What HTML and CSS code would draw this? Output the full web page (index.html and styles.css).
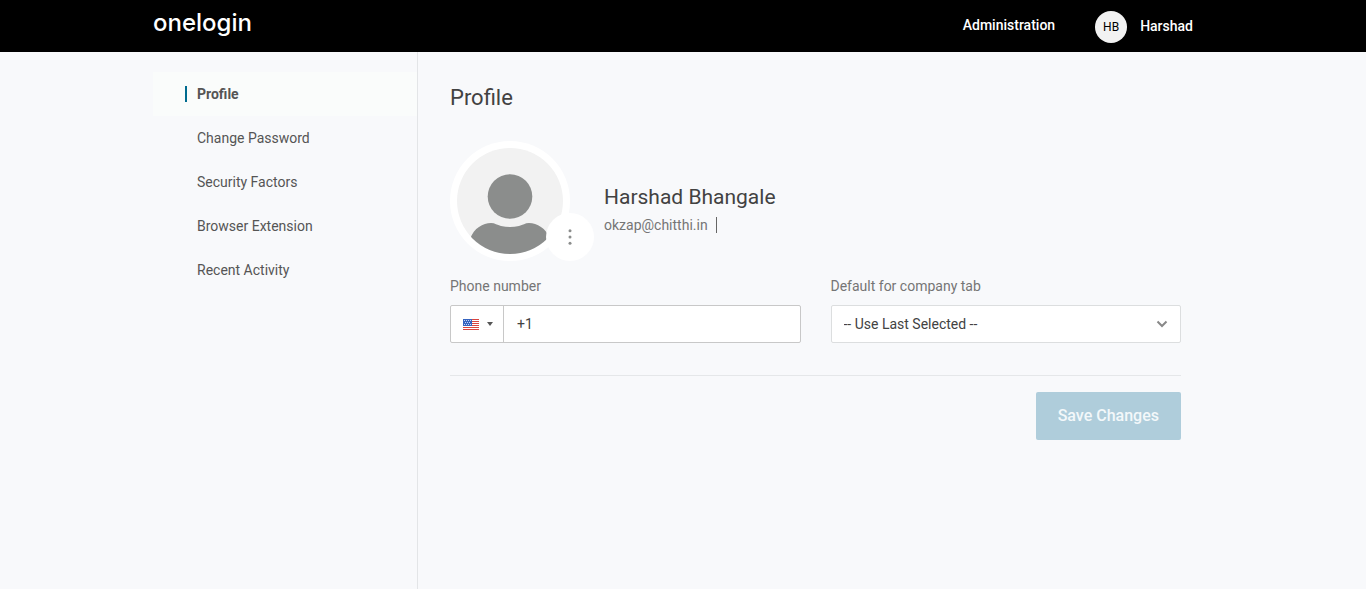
FILE: index.html
```html
<!DOCTYPE html>
<html lang="en">
<head>
<meta charset="utf-8">
<meta name="viewport" content="width=device-width, initial-scale=1">
<title>Profile</title>
<link rel="stylesheet" href="styles.css">
</head>
<body>
<header class="topbar">
  <div class="topbar-inner">
    <a class="logo" href="#">onelogin</a>
    <nav class="topnav">
      <a class="admin" href="#">Administration</a>
      <a class="user" href="#"><span class="initials">HB</span><span class="user-name">Harshad</span></a>
    </nav>
  </div>
</header>
<div class="shell">
  <nav class="sidebar">
    <a class="item active" href="#"><span class="item-label">Profile</span></a>
    <a class="item" href="#"><span class="item-label">Change Password</span></a>
    <a class="item" href="#"><span class="item-label">Security Factors</span></a>
    <a class="item" href="#"><span class="item-label">Browser Extension</span></a>
    <a class="item" href="#"><span class="item-label">Recent Activity</span></a>
  </nav>
  <main class="main">
    <h1 class="title">Profile</h1>
    <section class="person">
      <div class="photo">
        <svg class="photo-art" viewBox="0 0 120 120" aria-hidden="true">
          <defs><clipPath id="disc"><circle cx="60" cy="60" r="53"/></clipPath></defs>
          <circle cx="60" cy="60" r="60" fill="#fff"/>
          <circle cx="60" cy="60" r="53" fill="#f2f2f2"/>
          <g clip-path="url(#disc)" fill="#8b8d8c">
            <circle cx="60" cy="55.500" r="22.300"/>
            <path d="M20 98C24 87 33 82 41 82C45 82 47 84 51 85Q60 87 69 85C73 84 75 82 79 82C87 82 96 87 100 98V120H20Z"/>
          </g>
        </svg>
        <button class="more" type="button" aria-label="Photo options">
          <svg width="4" height="16" viewBox="0 0 4 16" fill="#8b8d8c"><circle cx="2" cy="1.700" r="1.500"/><circle cx="2" cy="8" r="1.500"/><circle cx="2" cy="14.300" r="1.500"/></svg>
        </button>
      </div>
      <div class="identity">
        <h2 class="name">Harshad Bhangale</h2>
        <p class="email">okzap@chitthi.in</p>
      </div>
    </section>
    <form class="form">
      <div class="fields">
        <div class="field">
          <label class="label" for="phone">Phone number</label>
          <div class="phone-box">
            <button class="country" type="button" aria-label="Country">
              <svg width="16" height="12" viewBox="0 0 16 12"><path fill="#fff" d="M0 1h16v11H0z"/><path fill="#d9453f" d="M0 1h16v1H0zM0 3h16v1H0zM0 5h16v1H0zM0 7h16v1H0zM0 9h16v1H0zM0 11h16v1H0z"/><path fill="#3764c0" d="M0 1h9v7H0z"/><path fill="#c5d5f3" d="M1 2h1v1H1zM3 2h1v1H3zM5 2h1v1H5zM7 2h1v1H7zM2 4h1v1H2zM4 4h1v1H4zM6 4h1v1H6zM1 6h1v1H1zM3 6h1v1H3zM5 6h1v1H5zM7 6h1v1H7z"/></svg>
              <svg width="6" height="4" viewBox="0 0 6 4"><path d="M0 0h6L3 4z" fill="#555"/></svg>
            </button>
            <input class="phone" id="phone" type="tel" value="+1">
          </div>
        </div>
        <div class="field">
          <label class="label" for="tab">Default for company tab</label>
          <div class="select-box">
            <select class="select" id="tab"><option>-- Use Last Selected --</option></select>
            <svg class="chevron" width="12" height="8" viewBox="0 0 12 8"><path d="M1.500 1.500L6 6L10.500 1.500" fill="none" stroke="#888" stroke-width="2"/></svg>
          </div>
        </div>
      </div>
      <div class="actions"><button class="save" type="submit" disabled>Save Changes</button></div>
    </form>
  </main>
</div>
</body>
</html>
```

FILE: styles.css
```css
* { box-sizing: border-box; }
body {
  margin: 0;
  min-height: 100vh;
  display: flex;
  flex-direction: column;
  background: #f8f9fb;
  color: #424242;
  font: 14px/20px Roboto, sans-serif;
}
a { color: inherit; text-decoration: none; }
h1, h2, p { margin: 0; font-weight: 400; }
button, input, select { font: inherit; color: inherit; }
.topbar { background: #000; color: #fff; }
.topbar-inner {
  max-width: 1060px;
  height: 52px;
  margin: 0 auto;
  padding-right: 20px;
  display: flex;
  justify-content: space-between;
}
.logo { font: 500 24px/46px Inter, sans-serif; }
.topnav { display: flex; gap: 40px; font-weight: 500; }
.admin { line-height: 50px; }
.user { display: flex; align-items: center; gap: 13px; padding-top: 2px; }
.user-name { padding-bottom: 2px; }
.initials {
  width: 32px;
  height: 32px;
  border-radius: 50%;
  background: #f2f2f2;
  color: #000;
  font-size: 12px;
  font-weight: 400;
  line-height: 32px;
  text-align: center;
}
.shell {
  flex: 1;
  width: 100%;
  max-width: 1060px;
  margin: 0 auto;
  display: flex;
}
.sidebar { width: 265px; padding-top: 20px; border-right: 1px solid #e3e5e7; }
.item { display: block; padding: 14px 32px; color: #555; line-height: 16px; }
.item-label { display: block; padding-left: 12px; }
.active { background: #fafcfb; font-weight: 700; }
.active .item-label { padding-left: 10px; border-left: 2px solid #006b8f; }
.main { flex: 1; padding: 30px 32px; }
.title { font-size: 22px; line-height: 32px; }
.person { display: flex; align-items: center; gap: 34px; margin-top: 27px; }
.photo { position: relative; width: 120px; height: 120px; }
.photo-art { display: block; }
.more {
  position: absolute;
  right: -24px;
  bottom: 0;
  width: 48px;
  height: 48px;
  display: grid;
  place-items: center;
  padding: 0;
  border: 0;
  border-radius: 50%;
  background: #fff;
}
.identity { padding-top: 12px; }
.name { font-size: 21px; line-height: 32px; }
.email {
  width: fit-content;
  margin-top: 4px;
  padding-right: 8px;
  border-right: 1px solid #666;
  color: #757575;
  line-height: 16px;
}
.form { margin-top: 15px; }
.fields {
  display: grid;
  grid-template-columns: 1fr 1fr;
  gap: 30px;
  padding-bottom: 32px;
  border-bottom: 1px solid #e5e7e9;
}
.label { display: block; margin-bottom: 9px; color: #757575; }
.phone-box, .select-box {
  height: 38px;
  display: flex;
  border: 1px solid #c8c8c8;
  border-radius: 2px;
  background: #fff;
}
.country {
  width: 53px;
  display: flex;
  align-items: center;
  gap: 8px;
  padding: 0 0 0 12px;
  border: 0;
  border-right: 1px solid #c8c8c8;
  background: none;
}
.phone { flex: 1; min-width: 0; padding: 0 13px; border: 0; background: none; }
.select-box { position: relative; border-color: #dcdedf; }
.select { width: 100%; padding: 0 12px; border: 0; background: none; appearance: none; }
.chevron { position: absolute; right: 12px; top: 14px; pointer-events: none; }
.actions { display: flex; justify-content: flex-end; padding-top: 16px; }
.save {
  height: 48px;
  padding: 0 22px;
  border: 0;
  border-radius: 2px;
  background: #afcddb;
  color: #f3f8fa;
  font-size: 16px;
  font-weight: 500;
}
```
